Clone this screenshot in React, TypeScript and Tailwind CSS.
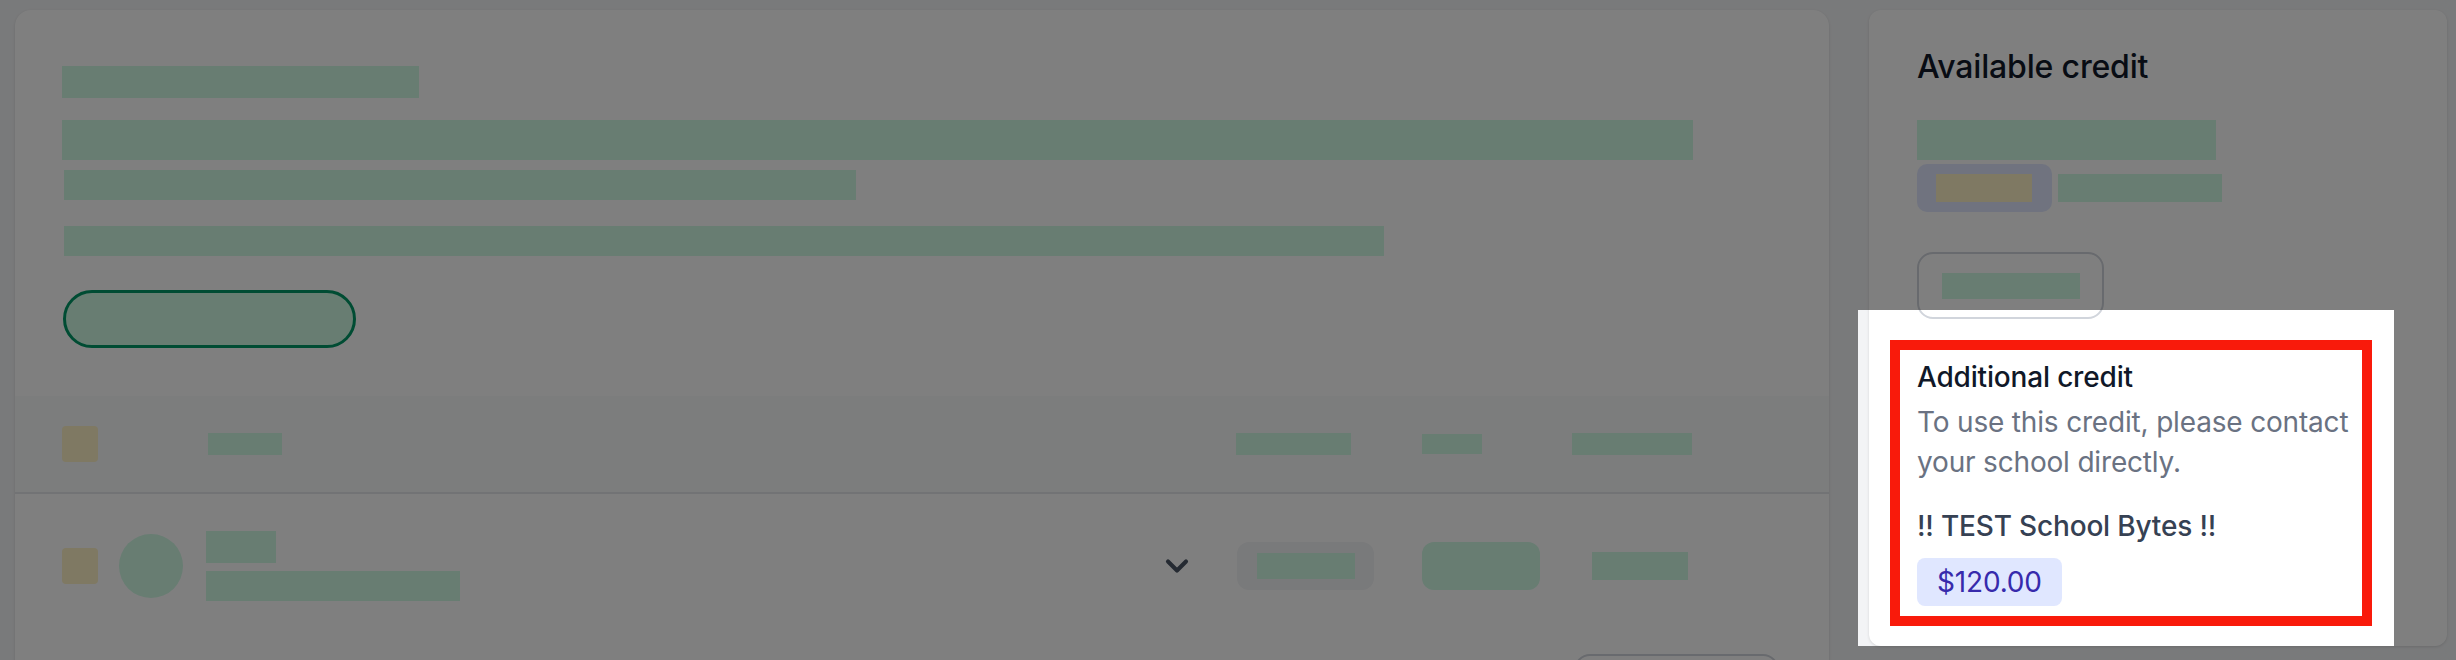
import React from "react";
import { ChevronDown } from "lucide-react";

// Placeholder blocks stand in for redacted content
const Green: React.FC<{ className?: string }> = ({ className = "" }) => (
  <div className={`bg-emerald-100 ${className}`} />
);
const Amber: React.FC<{ className?: string }> = ({ className = "" }) => (
  <div className={`bg-amber-100 ${className}`} />
);

const OrdersCard: React.FC = () => (
  <section className="h-[720px] w-[1814px] shrink-0 overflow-hidden rounded-[16px] bg-white shadow-[0_1px_3px_rgba(0,0,0,0.12)]">
    <div className="px-[47px] pt-[56px]">
      <Green className="h-[32px] w-[357px]" />
      <Green className="mt-[22px] h-[40px] w-[1631px]" />
      <Green className="ml-[2px] mt-[10px] h-[30px] w-[792px]" />
      <Green className="ml-[2px] mt-[26px] h-[30px] w-[1320px]" />
      <button className="ml-[1px] mt-[34px] flex h-[58px] w-[293px] rounded-full border-[3px] border-emerald-600 bg-emerald-100" />
    </div>

    {/* Table header */}
    <div className="mt-[48px] flex h-[98px] items-center border-b-2 border-gray-200 bg-gray-50 px-[47px]">
      <Amber className="h-[36px] w-[36px] rounded-[4px]" />
      <Green className="ml-[110px] h-[22px] w-[74px]" />
      <Green className="ml-[954px] h-[22px] w-[115px]" />
      <Green className="ml-[71px] h-[20px] w-[60px]" />
      <Green className="ml-[90px] h-[22px] w-[120px]" />
    </div>

    {/* Row */}
    <div className="flex h-[144px] items-center px-[47px]">
      <Amber className="h-[36px] w-[36px] rounded-[4px]" />
      <Green className="ml-[21px] h-[64px] w-[64px] rounded-full" />
      <div className="ml-[23px] flex w-[254px] flex-col gap-[8px]">
        <Green className="h-[32px] w-[70px]" />
        <Green className="h-[30px] w-[254px]" />
      </div>
      <ChevronDown className="ml-[699px] h-[36px] w-[36px] text-gray-600" strokeWidth={2.75} />
      <div className="ml-[42px] flex h-[48px] w-[137px] items-center justify-center rounded-[12px] bg-gray-100">
        <Green className="h-[26px] w-[98px]" />
      </div>
      <Green className="ml-[48px] h-[48px] w-[118px] rounded-[12px]" />
      <Green className="ml-[52px] h-[28px] w-[96px]" />
    </div>

    <div className="flex px-[47px] pt-[16px]">
      <div className="ml-[1512px] h-[60px] w-[205px] rounded-[16px] border-2 border-gray-300" />
    </div>
  </section>
);

const CreditCard: React.FC = () => (
  <aside className="w-[578px] shrink-0 rounded-[12px] bg-white px-[48px] pb-[40px] pt-[33px] tracking-[-0.011em] shadow-[0_1px_3px_rgba(0,0,0,0.12)]">
    <h2 className="text-[32px] font-medium leading-[48px] text-gray-900">Available credit</h2>
    <Green className="mt-[29px] h-[40px] w-[299px]" />
    <div className="mt-[4px] flex items-center gap-[6px]">
      <div className="flex h-[48px] w-[135px] items-center rounded-[10px] bg-indigo-100 px-[19px]">
        <Amber className="h-[28px] w-[96px]" />
      </div>
      <Green className="h-[28px] w-[164px]" />
    </div>
    <button className="mt-[40px] flex h-[67px] w-[187px] items-center justify-center rounded-[16px] border-2 border-gray-300 bg-white">
      <Green className="h-[26px] w-[138px]" />
    </button>

    <div className="mt-[38px]">
      <h3 className="text-[28px] font-medium leading-[40px] text-gray-900">Additional credit</h3>
      <p className="mt-[5px] text-[28px] leading-[40px] text-gray-500">
        To use this credit, please contact your school directly.
      </p>
      <p className="mt-[24px] text-[28px] font-medium leading-[40px] text-gray-700">!! TEST School Bytes !!</p>
      <span className="mt-[12px] inline-flex h-[48px] items-center rounded-[8px] bg-indigo-100 px-[20px] text-[28px] text-indigo-800">
        $120.00
      </span>
    </div>
  </aside>
);

export default function App() {
  return (
    <div className="relative h-[660px] w-[2456px] overflow-hidden bg-gray-100 font-['Inter','Noto_Sans',sans-serif] antialiased">
      <div className="flex items-start gap-[40px] pl-[15px] pt-[10px]">
        <OrdersCard />
        <CreditCard />
      </div>

      {/* Dimmed overlay with spotlight cut-out */}
      <div className="pointer-events-none absolute left-[1858px] top-[310px] h-[336px] w-[536px] shadow-[0_0_0_4000px_rgba(0,0,0,0.5)]" />
      {/* Highlight frame */}
      <div className="pointer-events-none absolute left-[1890px] top-[340px] h-[286px] w-[482px] border-[10px] border-[#f91a0b]" />
    </div>
  );
}
